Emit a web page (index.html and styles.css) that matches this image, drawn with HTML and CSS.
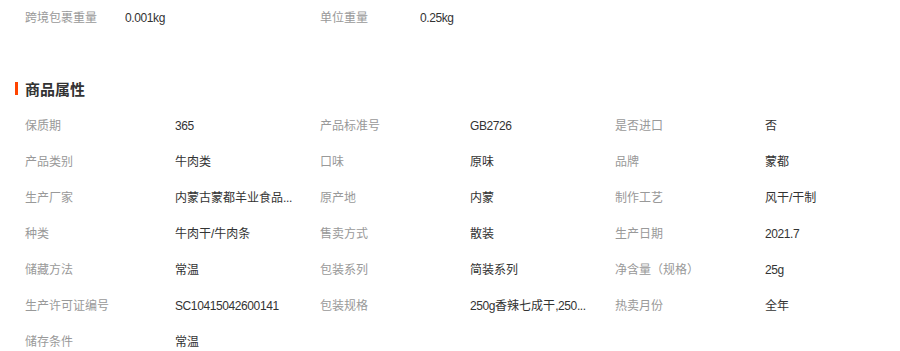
FILE: index.html
```html
<!DOCTYPE html>
<html lang="zh-CN">
<head>
<meta charset="utf-8">
<link rel="stylesheet" href="styles.css">
</head>
<body>
<div class="page">
  <div class="weights">
    <div class="label">跨境包裹重量</div><div class="value"><span class="lat">0.001kg</span></div>
    <div class="label">单位重量</div><div class="value"><span class="lat">0.25kg</span></div>
  </div>
  <h2 class="title"><span class="bar"></span>商品属性</h2>
  <div class="attrs">
    <div class="label">保质期</div><div class="value"><span class="lat">365</span></div>
    <div class="label">产品标准号</div><div class="value"><span class="lat">GB2726</span></div>
    <div class="label">是否进口</div><div class="value">否</div>

    <div class="label">产品类别</div><div class="value">牛肉类</div>
    <div class="label">口味</div><div class="value">原味</div>
    <div class="label">品牌</div><div class="value">蒙都</div>

    <div class="label">生产厂家</div><div class="value" title="内蒙古蒙都羊业食品有限公司">内蒙古蒙都羊业食品<span class="lat">...</span></div>
    <div class="label">原产地</div><div class="value">内蒙</div>
    <div class="label">制作工艺</div><div class="value">风干/干制</div>

    <div class="label">种类</div><div class="value">牛肉干/牛肉条</div>
    <div class="label">售卖方式</div><div class="value">散装</div>
    <div class="label">生产日期</div><div class="value"><span class="lat">2021.7</span></div>

    <div class="label">储藏方法</div><div class="value">常温</div>
    <div class="label">包装系列</div><div class="value">简装系列</div>
    <div class="label">净含量（规格）</div><div class="value"><span class="lat">25g</span></div>

    <div class="label">生产许可证编号</div><div class="value"><span class="lat">SC10415042600141</span></div>
    <div class="label">包装规格</div><div class="value" title="250g香辣七成干,250g原味七成干"><span class="lat">250g</span>香辣七成干<span class="lat">,250...</span></div>
    <div class="label">热卖月份</div><div class="value">全年</div>

    <div class="label">储存条件</div><div class="value">常温</div>
  </div>
</div>
</body>
</html>
```

FILE: styles.css
```css
html, body {
  margin: 0;
  padding: 0;
  background: #fff;
}
body {
  font-family: "Liberation Sans", "Noto Sans CJK SC", sans-serif;
  font-size: 12px;
  color: #333;
}
.page {
  width: 900px;
}
.weights {
  display: grid;
  grid-template-columns: 100px 195px 100px 195px;
  padding-left: 25px;
  height: 36px;
  line-height: 36px;
}
.label {
  color: #999;
  white-space: nowrap;
}
.value {
  color: #333;
  white-space: nowrap;
  overflow: hidden;
}
.lat {
  letter-spacing: -0.4px;
}
.title {
  box-sizing: border-box;
  margin: 36px 0 0 0;
  height: 36px;
  padding: 0 0 4px 15px;
  display: flex;
  align-items: center;
  gap: 7px;
  font-size: 15px;
  font-weight: bold;
  color: #333;
}
.bar {
  width: 3px;
  height: 13px;
  background: #ff4400;
}
.attrs {
  display: grid;
  grid-template-columns: 150px 145px 150px 145px 150px 145px;
  grid-auto-rows: 36px;
  line-height: 36px;
  padding-left: 25px;
}
```
